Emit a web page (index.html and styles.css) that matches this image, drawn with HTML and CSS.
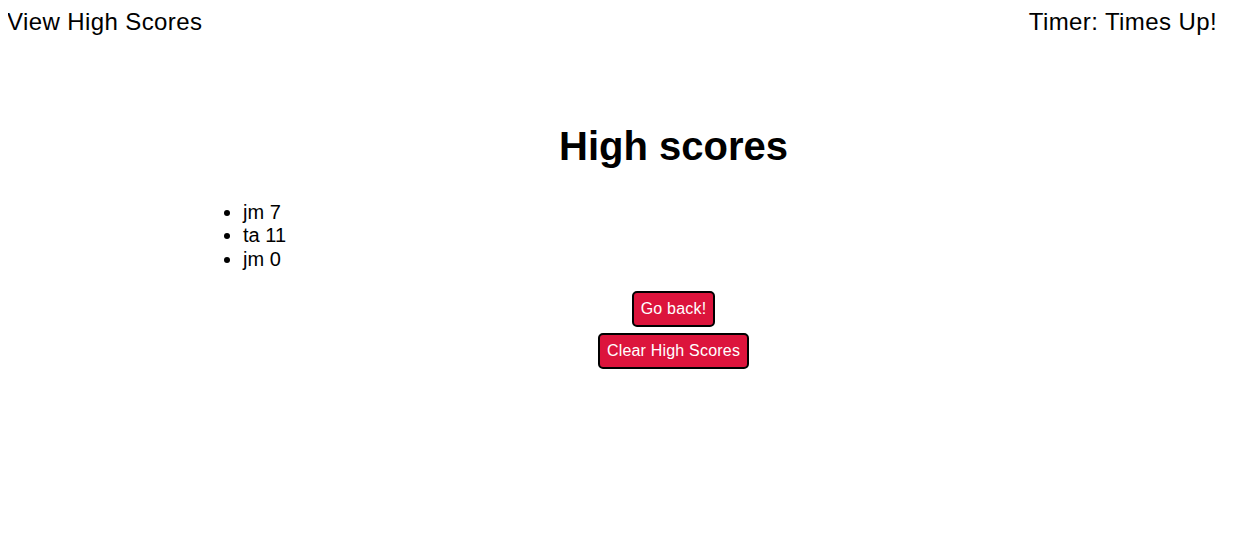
FILE: index.html
```html
<!DOCTYPE html>
<html lang="en">
<head>
<meta charset="utf-8">
<title>High scores</title>
<link rel="stylesheet" href="styles.css">
</head>
<body>
<header class="top-bar">
  <a class="view-scores">View High Scores</a>
  <span class="timer">Timer: Times Up!</span>
</header>
<main class="scores">
  <h1 class="scores-title">High scores</h1>
  <ul class="score-list">
    <li>jm 7</li>
    <li>ta 11</li>
    <li>jm 0</li>
  </ul>
  <div class="actions">
    <button class="btn">Go back!</button>
    <button class="btn">Clear High Scores</button>
  </div>
</main>
</body>
</html>
```

FILE: styles.css
```css
body {
  margin: 8px;
  font-family: "Liberation Sans", Arial, sans-serif;
  color: #000;
  background: #fff;
}

.top-bar {
  display: flex;
  justify-content: space-between;
  font-size: 24px;
  line-height: 28px;
  letter-spacing: 0.4px;
  padding-right: 24px;
}

.view-scores {
  cursor: pointer;
  margin-left: -1px;
}

.scores {
  margin: 0 97px 0 195px;
  padding-top: 87px;
  display: flex;
  flex-direction: column;
}

.scores-title {
  font-size: 40px;
  line-height: 46px;
  font-weight: bold;
  text-align: center;
  margin: 0;
}

.score-list {
  font-size: 20px;
  line-height: 23.5px;
  margin: 31.5px 0 20px;
  padding-left: 40px;
}

.actions {
  display: flex;
  flex-direction: column;
  align-items: center;
  gap: 6px;
}

.btn {
  font-family: "Liberation Sans", Arial, sans-serif;
  font-size: 16px;
  line-height: 18px;
  letter-spacing: 0.2px;
  color: #fff;
  background: #dc143c;
  border: 2px solid #000;
  border-radius: 5px;
  padding: 7px;
  cursor: pointer;
}
```
